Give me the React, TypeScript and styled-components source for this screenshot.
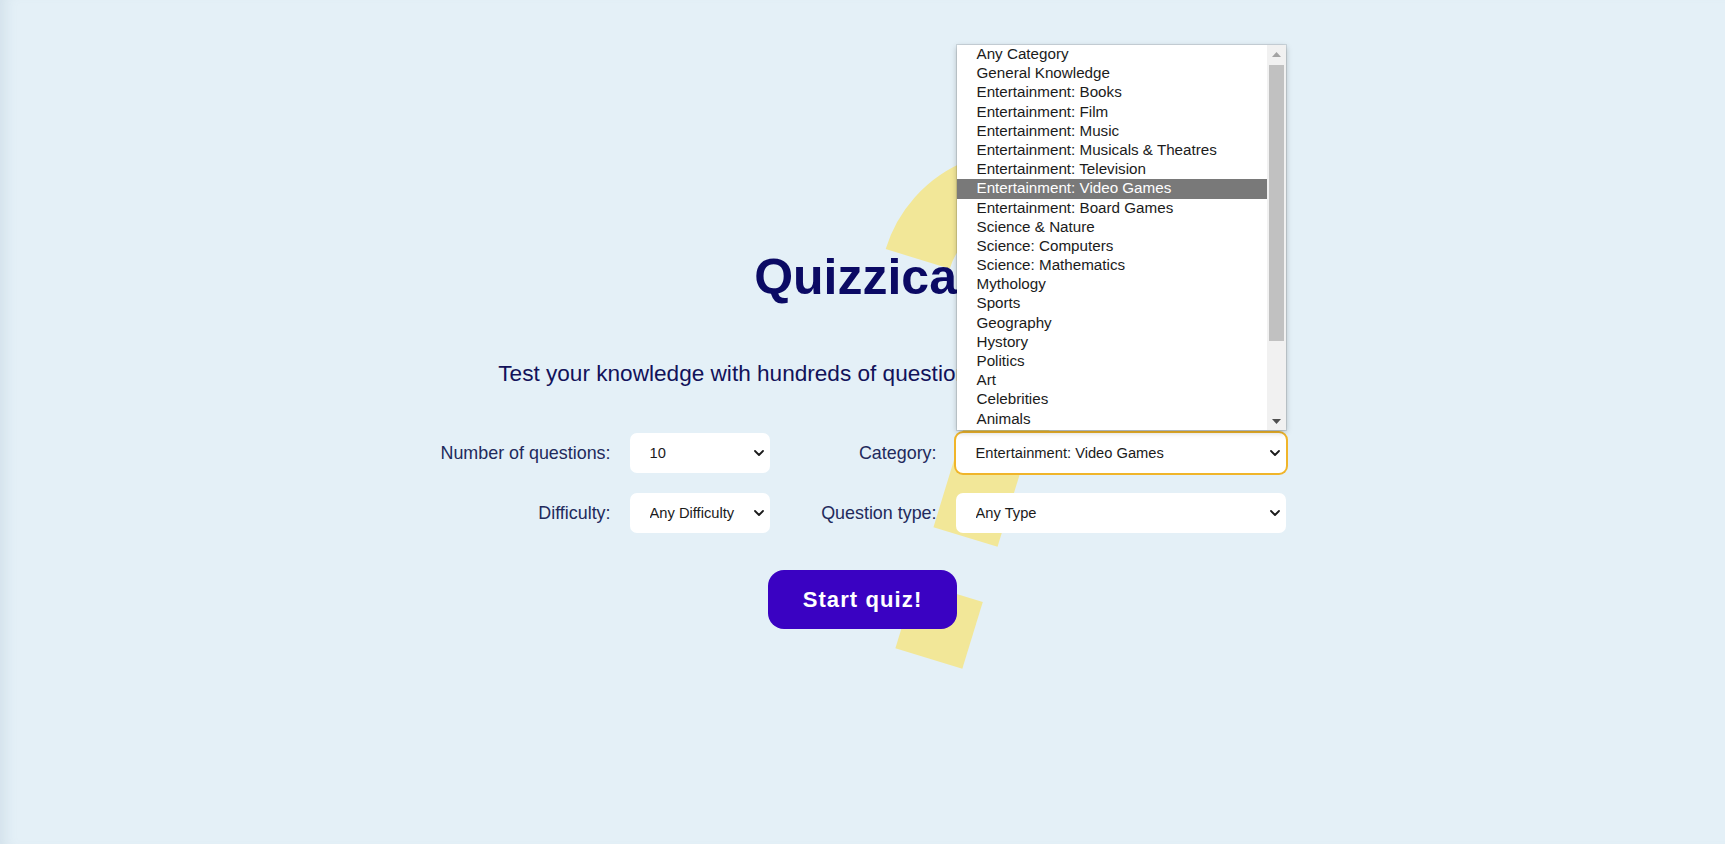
import React from "react";
import styled, { createGlobalStyle } from "styled-components";

const GlobalStyle = createGlobalStyle`
  html, body {
    margin: 0;
    padding: 0;
  }
  body {
    background: #e4f0f7;
    font-family: "Liberation Sans", Arial, sans-serif;
  }
  * { box-sizing: border-box; }
`;

const Page = styled.main`
  position: relative;
  min-height: 100vh;
  overflow: hidden;
  background: #e4f0f7;
  box-shadow: inset 14px 0 14px -10px rgba(120, 150, 170, 0.18);
  display: flex;
  flex-direction: column;
  align-items: center;
  padding-top: 249px;
`;

const Backdrop = styled.svg`
  position: absolute;
  top: 0;
  left: 50%;
  width: 1px;
  height: 1px;
  overflow: visible;
  z-index: 0;
  pointer-events: none;
`;

const Content = styled.div`
  position: relative;
  z-index: 1;
  display: flex;
  flex-direction: column;
  align-items: center;
`;

const Title = styled.h1`
  margin: 0;
  font-size: 50px;
  line-height: 56px;
  font-weight: 700;
  color: #0b0a64;
`;

const Subtitle = styled.p`
  margin: 56px 0 0;
  font-size: 22.6px;
  line-height: 26px;
  color: #12125a;
`;

const Form = styled.div`
  margin-top: 46px;
  margin-left: 1px;
  display: grid;
  grid-template-columns: auto 140px 148px 330px;
  column-gap: 19px;
  row-gap: 20px;
  align-items: center;
`;

const Label = styled.label`
  justify-self: end;
  font-size: 17.9px;
  color: #222a5c;
  white-space: nowrap;
`;

const Field = styled.div`
  position: relative;
  height: 40px;
`;

const Select = styled.select<{ $focused?: boolean }>`
  appearance: none;
  -webkit-appearance: none;
  width: 100%;
  height: 40px;
  border: none;
  border-radius: 7px;
  background: #ffffff;
  padding: 0 24px 0 20px;
  font-family: "Liberation Sans", Arial, sans-serif;
  font-size: 14.7px;
  color: #1b1b1b;
  outline: none;
  box-shadow: ${(p) => (p.$focused ? "0 0 0 2px #f0b52a" : "none")};
`;

const Chevron = styled.svg`
  position: absolute;
  right: 6px;
  top: 50%;
  width: 10px;
  height: 6px;
  margin-top: -3px;
  pointer-events: none;
`;

const Popup = styled.div`
  position: absolute;
  left: 1px;
  bottom: calc(100% + 3px);
  width: 329px;
  height: 385px;
  background: #ffffff;
  box-shadow: 0 0 0 1px rgba(0, 0, 0, 0.1), 0 2px 6px rgba(0, 0, 0, 0.25);
  overflow: hidden;
  z-index: 5;
`;

const OptionList = styled.ul`
  list-style: none;
  margin: 0;
  padding: 0 19px 0 0;
`;

const OptionItem = styled.li<{ $active?: boolean }>`
  height: 19.2px;
  line-height: 18.4px;
  padding-left: 20px;
  font-size: 15.2px;
  white-space: nowrap;
  color: ${(p) => (p.$active ? "#ffffff" : "#1b1b1b")};
  background: ${(p) => (p.$active ? "#797979" : "transparent")};
`;

const ScrollTrack = styled.div`
  position: absolute;
  top: 0;
  right: 0;
  bottom: 0;
  width: 19px;
  background: #f1f1f1;
`;

const ScrollThumb = styled.div`
  position: absolute;
  top: 20px;
  left: 2px;
  right: 2px;
  height: 276px;
  background: #c1c1c1;
`;

const ScrollArrow = styled.svg<{ $down?: boolean }>`
  position: absolute;
  left: 5px;
  width: 9px;
  height: 5px;
  ${(p) => (p.$down ? "bottom: 6px;" : "top: 7px;")}
`;

const StartButton = styled.button`
  margin-top: 37px;
  width: 189px;
  height: 59px;
  border: none;
  border-radius: 16px;
  background: #3a02c2;
  color: #ffffff;
  font-family: "Liberation Sans", Arial, sans-serif;
  font-size: 22px;
  font-weight: 700;
  letter-spacing: 1.1px;
  cursor: pointer;
`;

const categories = [
  "Any Category",
  "General Knowledge",
  "Entertainment: Books",
  "Entertainment: Film",
  "Entertainment: Music",
  "Entertainment: Musicals & Theatres",
  "Entertainment: Television",
  "Entertainment: Video Games",
  "Entertainment: Board Games",
  "Science & Nature",
  "Science: Computers",
  "Science: Mathematics",
  "Mythology",
  "Sports",
  "Geography",
  "Hystory",
  "Politics",
  "Art",
  "Celebrities",
  "Animals",
];

const ChevronIcon = () => (
  <Chevron viewBox="0 0 10 6">
    <path d="M1 1 L5 5 L9 1" fill="none" stroke="#1b1b1b" strokeWidth="1.8" strokeLinecap="round" strokeLinejoin="round" />
  </Chevron>
);

const SelectField: React.FC<{ value: string; options: string[]; focused?: boolean; children?: React.ReactNode }> = ({
  value,
  options,
  focused,
  children,
}) => (
  <Field>
    <Select $focused={focused} defaultValue={value}>
      {options.map((o) => (
        <option key={o} value={o}>
          {o}
        </option>
      ))}
    </Select>
    <ChevronIcon />
    {children}
  </Field>
);

const QuestionMark = () => (
  <Backdrop>
    <g transform="translate(102.5 537) rotate(17)" fill="#f2e798">
      <path
        d="M -127 -252 A 105 105 0 1 1 68.9 -199.5 C 48.9 -164.9 0 -140 0 -100 L 0 0"
        fill="none"
        stroke="#f2e798"
        strokeWidth="67"
        strokeLinecap="butt"
      />
      <rect x="-34.5" y="57" width="70" height="70" />
    </g>
  </Backdrop>
);

export default function App() {
  return (
    <>
      <GlobalStyle />
      <Page>
        <QuestionMark />
        <Content>
          <Title>Quizzical</Title>
          <Subtitle>Test your knowledge with hundreds of questions from various categories!</Subtitle>
          <Form>
            <Label>Number of questions:</Label>
            <SelectField value="10" options={["5", "10", "15", "20", "25", "30"]} />
            <Label>Category:</Label>
            <SelectField value="Entertainment: Video Games" options={categories} focused>
              <Popup>
                <OptionList>
                  {categories.map((c) => (
                    <OptionItem key={c} $active={c === "Entertainment: Video Games"}>
                      {c}
                    </OptionItem>
                  ))}
                </OptionList>
                <ScrollTrack>
                  <ScrollArrow viewBox="0 0 9 5">
                    <polygon points="0,5 4.5,0 9,5" fill="#a3a3a3" />
                  </ScrollArrow>
                  <ScrollThumb />
                  <ScrollArrow viewBox="0 0 9 5" $down>
                    <polygon points="0,0 4.5,5 9,0" fill="#505050" />
                  </ScrollArrow>
                </ScrollTrack>
              </Popup>
            </SelectField>
            <Label>Difficulty:</Label>
            <SelectField value="Any Difficulty" options={["Any Difficulty", "Easy", "Medium", "Hard"]} />
            <Label>Question type:</Label>
            <SelectField value="Any Type" options={["Any Type", "Multiple Choice", "True / False"]} />
          </Form>
          <StartButton>Start quiz!</StartButton>
        </Content>
      </Page>
    </>
  );
}
